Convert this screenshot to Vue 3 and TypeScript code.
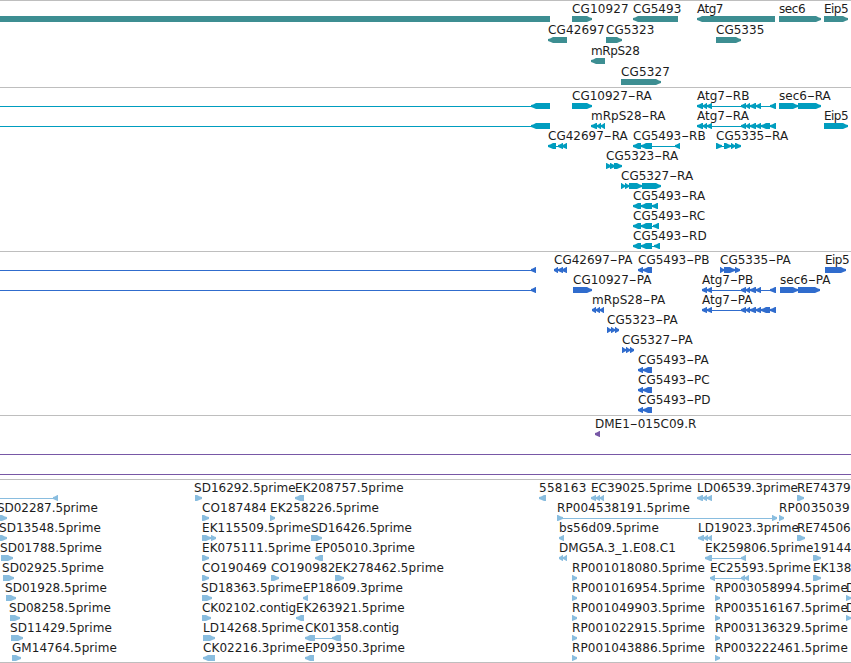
<script setup lang="ts">
type Direction = 'L' | 'R'
type Block = [start: number, end: number]
interface Feature {
  label?: string
  x: number
  end?: number
  dir: Direction
  blocks: Block[]
  line?: Block
}
interface Track {
  name: string
  color: string
  height: number
  step: number
  rows: Feature[][]
}

const CAP = 0.3
const DASH = 7.9

/** Feature with a label; `end` is the right edge of the label. */
function f(label: string, x: number, end: number, dir: Direction, blocks: Block[], line?: Block): Feature {
  return { label, x, end, dir, blocks, line }
}
/** Feature whose label lies outside the visible window. */
function bare(dir: Direction, blocks: Block[], line?: Block): Feature {
  return { x: 0, dir, blocks, line }
}

const atgTail: Block[] = [[741, 746], [746, 750], [750, 756], [756, 761]]
const atgFull: Block[] = [...atgTail, [761, 770], [770, 776]]

const tracks: Track[] = [
  {
    name: 'genes',
    color: '#3d8e92',
    height: 87,
    step: 21,
    rows: [
      [
        f('CG10927', 572, 628.3, 'R', [[572, 592]]),
        f('CG5493', 633, 681, 'L', [[633, 678]]),
        f('Atg7', 697, 723.2, 'L', [[697, 775]]),
        f('sec6', 779, 805.3, 'R', [[779, 821]]),
        f('Eip5', 824, 848.3, 'R', [[824, 848]]),
        { x: 0, dir: 'L', blocks: [], line: undefined },
      ],
      [
        f('CG42697', 548, 604.3, 'L', [[548, 567]]),
        f('CG5323', 606, 654, 'R', [[606, 622]]),
        f('CG5335', 716, 764, 'R', [[716, 741]]),
      ],
      [f('mRpS28', 591, 639.5, 'L', [[591, 605]])],
      [f('CG5327', 621, 669.5, 'R', [[621, 661]])],
    ],
  },
  {
    name: 'transcripts',
    color: '#009dbf',
    height: 164,
    step: 20,
    rows: [
      [
        bare('L', [[531, 550]], [0, 540]),
        f('CG10927-RA', 572, 652.7, 'R', [[572, 592]]),
        f('Atg7-RB', 697, 745.7, 'L', [[697, 703], [703, 707], [707, 712], ...atgTail, [770, 776]], [700, 775]),
        f('sec6-RA', 779, 829.7, 'R', [[779, 798], [798, 821]], [790, 800]),
      ],
      [
        bare('L', [[531, 550]], [0, 540]),
        f('mRpS28-RA', 591, 664, 'L', [[591, 597], [597, 601], [601, 605]]),
        f('Atg7-RA', 697, 748, 'L', [[697, 703], [703, 707], [707, 712], ...atgFull], [700, 775]),
        f('Eip5', 824, 848.3, 'R', [[824, 848]]),
      ],
      [
        f('CG42697-RA', 548, 628.5, 'L', [[548, 556], [558, 563], [562, 567]], [550, 565]),
        f('CG5493-RB', 633, 703.7, 'L', [[633, 641], [641, 652], [675, 680]], [640, 678]),
        f('CG5335-RA', 716, 788.7, 'R', [[716, 722], [724, 731], [731, 735], [735, 741]], [718, 738]),
      ],
      [f('CG5323-RA', 606, 678.7, 'R', [[606, 611], [610, 615], [614, 622]])],
      [f('CG5327-RA', 621, 693.7, 'R', [[621, 625], [625, 629], [629, 642], [642, 661]], [622, 650])],
      [f('CG5493-RA', 633, 706, 'L', [[633, 641], [641, 652], [652, 658]], [640, 656])],
      [f('CG5493-RC', 633, 704.7, 'L', [[633, 641], [641, 652], [653, 659]], [640, 657])],
      [f('CG5493-RD', 633, 705.5, 'L', [[633, 641], [641, 652], [654, 660]], [640, 658])],
    ],
  },
  {
    name: 'proteins',
    color: '#306ccd',
    height: 164,
    step: 20,
    rows: [
      [
        bare('L', [[531, 536]], [0, 535]),
        f('CG42697-PA', 554, 634, 'L', [[554, 558], [558, 563], [562, 567]]),
        f('CG5493-PB', 638, 708, 'L', [[638, 643], [643, 652]]),
        f('CG5335-PA', 720, 792, 'R', [[720, 724], [724, 735], [735, 740]], [721, 738]),
        f('Eip5', 825, 849.3, 'R', [[825, 846]]),
      ],
      [
        bare('L', [[531, 536]], [0, 535]),
        f('CG10927-PA', 573, 653, 'R', [[573, 592]]),
        f('Atg7-PB', 702, 749.7, 'L', [[702, 707], [707, 712], ...atgTail, [770, 776]], [705, 775]),
        f('sec6-PA', 780, 830, 'R', [[780, 798], [798, 820]], [790, 800]),
      ],
      [
        f('mRpS28-PA', 592, 664, 'L', [[592, 596], [596, 600], [600, 604]]),
        f('Atg7-PA', 702, 751.5, 'L', [[702, 707], [707, 712], ...atgFull], [705, 775]),
      ],
      [f('CG5323-PA', 607, 678.7, 'R', [[607, 611], [611, 615], [615, 619]])],
      [f('CG5327-PA', 622, 694, 'R', [[622, 626], [626, 630], [630, 634]])],
      [f('CG5493-PA', 638, 710, 'L', [[638, 643], [643, 652]])],
      [f('CG5493-PC', 638, 708.7, 'L', [[638, 643], [643, 652]])],
      [f('CG5493-PD', 638, 709.5, 'L', [[638, 643], [643, 652]])],
    ],
  },
  {
    name: 'clones',
    color: '#7858a6',
    height: 64,
    step: 20,
    rows: [
      [f('DME1-015C09.R', 595, 695.7, 'L', [[595, 600]])],
      [bare('R', [], [0, 851])],
      [bare('R', [], [0, 851])],
    ],
  },
  {
    name: 'ests',
    color: '#89bddf',
    height: 183,
    step: 20,
    rows: [
      [
        bare('L', [[53, 58]], [0, 57]),
        f('SD16292.5prime', 194, 295.3, 'R', [[195, 202]]),
        f('EK208757.5prime', 295, 403.3, 'L', [[295, 304]]),
        f('558163', 539, 586, 'L', [[539, 546]]),
        f('EC39025.5prime', 591, 691.5, 'L', [[591, 596], [596, 600], [600, 604]]),
        f('LD06539.3prime', 697, 797.7, 'L', [[697, 703], [703, 707], [707, 712]]),
        f('RE74379', 797, 850.3, 'R', [[797, 804]]),
      ],
      [
        f('SD02287.5prime', -3, 97.5, 'R', [[-4, 7]]),
        f('CO187484', 202, 266.3, 'R', [[202, 209]]),
        f('EK258226.5prime', 270, 378.5, 'R', [[270, 275]]),
        f('RP004538191.5prime', 557, 689.5, 'R', [[557, 563], [772, 777]], [558, 776]),
        f('RP0035039', 779, 849.3, 'R', [[779, 784]]),
      ],
      [
        f('SD13548.5prime', -1, 100.5, 'R', [[-4, 7]]),
        f('EK115509.5prime', 202, 310.5, 'R', [[202, 211], [211, 216]], [203, 214]),
        f('SD16426.5prime', 311, 411.5, 'R', [[311, 322]]),
        f('bs56d09.5prime', 559, 658.5, 'L', [[559, 564]]),
        f('LD19023.3prime', 698, 798.5, 'L', [[698, 704], [704, 708], [708, 712]]),
        f('RE74506', 797, 850.3, 'R', [[797, 805]]),
      ],
      [
        f('SD01788.5prime', 0, 101.5, 'R', [[1, 13]]),
        f('EK075111.5prime', 202, 310.5, 'R', [[202, 209]]),
        f('EP05010.3prime', 315, 414.5, 'L', [[315, 323]]),
        f('DMG5A.3_1.E08.C1', 559, 675.5, 'L', [[559, 563], [563, 567]]),
        f('EK259806.5prime', 705, 813, 'L', [[705, 712], [741, 746]], [708, 745]),
        f('19144', 813, 851, 'R', [[813, 821]]),
      ],
      [
        f('SD02925.5prime', 2, 103.5, 'R', [[3, 14]]),
        f('CO190469', 202, 266.3, 'R', [[202, 209]]),
        f('CO190982', 271, 335, 'R', [[271, 279]]),
        f('EK278462.5prime', 335, 443.5, 'R', [[335, 344]]),
        f('RP001018080.5prime', 572, 704.7, 'R', [[572, 577]]),
        f('EC25593.5prime', 710, 810.5, 'L', [[710, 715], [741, 745], [745, 749]], [711, 748]),
        f('EK138', 813, 851, 'R', [[813, 821]]),
      ],
      [
        f('SD01928.5prime', 5, 106.5, 'R', [[6, 16]]),
        f('SD18363.5prime', 201, 302.3, 'R', [[202, 212]]),
        f('EP18609.3prime', 303, 402.5, 'L', [[303, 308]]),
        f('RP001016954.5prime', 572, 704.7, 'R', [[572, 577]]),
        f('RP003058994.5prime', 715, 847.5, 'R', [[715, 720]]),
        f('D', 846, 855, 'R', [[846, 851]]),
      ],
      [
        f('SD08258.5prime', 9, 110.5, 'R', [[10, 20]]),
        f('CK02102.contig', 202, 295.9, 'R', [[202, 211]]),
        f('EK263921.5prime', 296, 404.4, 'L', [[296, 304]]),
        f('RP001049903.5prime', 572, 704.7, 'R', [[572, 577]]),
        f('RP003516167.5prime', 715, 847.5, 'R', [[715, 720]]),
        f('D', 846, 855, 'R', [[846, 851]]),
      ],
      [
        f('SD11429.5prime', 10, 111.5, 'R', [[11, 23]]),
        f('LD14268.5prime', 203, 303.7, 'R', [[203, 215]]),
        f('CK01358.contig', 305, 398.9, 'L', [[305, 315], [332, 341]], [310, 338]),
        f('RP001022915.5prime', 572, 704.7, 'R', [[572, 577]]),
        f('RP003136329.5prime', 715, 847.5, 'R', [[715, 720]]),
      ],
      [
        f('GM14764.5prime', 12, 116.5, 'R', [[12, 21]]),
        f('CK02216.3prime', 203, 304.5, 'L', [[203, 215]]),
        f('EP09350.3prime', 305, 404.5, 'L', [[305, 314]]),
        f('RP001043886.5prime', 572, 704.7, 'R', [[572, 577]]),
        f('RP003222461.5prime', 715, 847.5, 'R', [[715, 720]]),
      ],
    ],
  },
]

// The first gene starts left of the window and ends at 550 with a flat edge.
tracks[0].rows[0].push(bare('L', [[-20, 550]]))

/** Box with a blunt, pointed end on the side the strand runs to. */
function shape([a, b]: Block, dir: Direction, top: number): string {
  const head = Math.min(6, b - a)
  const tip = dir === 'R' ? b : a
  const base = dir === 'R' ? a : b
  const sign = dir === 'R' ? -1 : 1
  const shoulder = tip + sign * (head - (head > 5 ? 1 : 0.5))
  const cheek = tip + sign * head * 0.35
  return [
    [base, top],
    [shoulder, top],
    [cheek, top + 1.5],
    [tip, top + 2],
    [tip, top + 4],
    [cheek, top + 4.7],
    [shoulder, top + 6],
    [base, top + 6],
  ].map((p) => p.join(',')).join(' ')
}

function parts(label: string): string[] {
  return label.split(/(-)/)
}

function labelLength(item: Feature): number | undefined {
  return item.label?.includes('-') ? undefined : (item.end ?? 0) - item.x + CAP
}
</script>

<template>
  <main class="browser">
    <section v-for="track in tracks" :key="track.name" class="track">
      <svg width="851" :height="track.height - 1" :viewBox="`0 1 851 ${track.height - 1}`" :fill="track.color">
        <g v-for="(row, r) in track.rows" :key="r">
          <g v-for="(item, i) in row" :key="i">
            <rect
              v-if="item.line"
              :x="item.line[0]"
              :y="19 + r * track.step"
              :width="item.line[1] - item.line[0]"
              height="1"
            />
            <polygon v-for="(block, b) in item.blocks" :key="b" :points="shape(block, item.dir, 16 + r * track.step)" />
            <text v-if="item.label" :x="item.x" :y="13 + r * track.step" :textLength="labelLength(item)"><tspan
              v-for="(part, p) in parts(item.label)"
              :key="p"
              :textLength="part === '-' ? DASH : undefined"
              :lengthAdjust="part === '-' ? 'spacingAndGlyphs' : undefined"
            >{{ part }}</tspan></text>
          </g>
        </g>
      </svg>
    </section>
  </main>
</template>

<style>
body {
  background: #fff;
}
</style>

<style scoped>
.browser {
  width: 851px;
  height: 663px;
  box-sizing: border-box;
  overflow: hidden;
  border-bottom: 1px solid #bebebe;
}
.track {
  border-top: 1px solid #bebebe;
}
svg {
  display: block;
}
text {
  fill: #1c1c1c;
  font-family: "DejaVu Sans", sans-serif;
  font-size: 12px;
}
</style>
